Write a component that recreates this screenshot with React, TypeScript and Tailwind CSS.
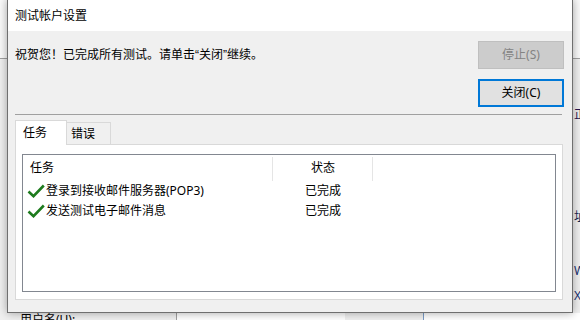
import React from "react";

function Check() {
  return (
    <svg width="18" height="14" viewBox="0 0 18 14" className="shrink-0">
      <path d="M1.5 7.5 L6.5 12.2 L16.8 1.5" fill="none" stroke="#1e7b1e" strokeWidth="2.6" strokeLinejoin="miter" strokeLinecap="butt" />
    </svg>
  );
}

const Q = ({ children }: { children: React.ReactNode }) => (
  <span style={{ fontFamily: '"Liberation Sans", Arial, sans-serif' }}>{children}</span>
);

export default function App() {
  const rows = [
    { name: "登录到接收邮件服务器(POP3)", status: "已完成" },
    { name: "发送测试电子邮件消息", status: "已完成" },
  ];
  return (
    <div
      className="relative w-[580px] h-[320px] overflow-hidden bg-[#f0f0f0] text-[12px] text-black leading-none"
      style={{ fontFamily: '"Noto Sans", "Noto Sans CJK SC", sans-serif' }}
    >
      {/* underlying window */}
      <div className="absolute left-0 right-0 top-0 h-[59px] bg-[#fafafa] border-b border-[#a0a0a0]" />
      <div className="absolute left-[176px] top-[313px] w-[169px] h-[10px] bg-white border-l border-[#a0a0a0]" />
      <div className="absolute left-[423px] top-[313px] w-[160px] h-[10px] bg-white border-l border-[#7a9cc6]" />
      <div className="absolute left-[20px] top-[314px] text-[12px]">用户名(U):</div>
      <div className="absolute left-[574px] top-[109px] text-[12px] text-[#2a1450]">正</div>
      <div className="absolute left-[574px] top-[211px] text-[12px] text-[#1a2a50]">址</div>
      <div className="absolute left-[574px] top-[265px] text-[12px] text-[#1a3070]">W</div>
      <div className="absolute left-[574px] top-[290px] text-[12px] text-[#1a3070]">X</div>

      {/* dialog */}
      <div className="absolute left-[7px] top-[-1px] w-[566px] h-[314px] border border-[#6f6f6f] bg-[#f0f0f0] shadow-[0_0_9px_rgba(0,0,0,0.35)] flex flex-col">
        <div className="h-[31px] bg-white flex items-center pl-[7px] shrink-0">测试帐户设置</div>
        <div className="flex-1 flex flex-col pl-[7px] pr-[8px]">
          <div className="flex justify-between items-start mt-[10px]">
            <div className="h-[28px] flex items-center">
              祝贺您！已完成所有测试。请单击<Q>“</Q>关闭<Q>”</Q>继续。
            </div>
            <div className="flex flex-col gap-[10px]">
              <div className="w-[86px] h-[28px] flex items-center justify-center bg-[#cccccc] border border-[#bfbfbf] text-[#838383]">
                停止(S)
              </div>
              <div className="w-[86px] h-[28px] flex items-center justify-center bg-[#e1e1e1] border-2 border-[#0078d7]">
                关闭(C)
              </div>
            </div>
          </div>
          <div className="mt-[7px] h-px bg-[#a0a0a0] mr-[2px]" />
          <div className="mt-[5px] mr-[1px]">
            <div className="relative z-10 flex items-end h-[24px]">
              <div className="w-[52px] h-[25px] -mb-px bg-white border border-b-0 border-[#d9d9d9] flex items-center pl-[7px]">
                任务
              </div>
              <div className="w-[44px] h-[22px] bg-[#f0f0f0] border-t border-r border-[#d9d9d9] flex items-center pl-[4px]">
                错误
              </div>
            </div>
            <div className="h-[156px] border border-[#d9d9d9] bg-white pt-[9px] pl-[6px] pr-[6px] pb-[7px]">
              <div className="h-full border border-[#828790] bg-white flex flex-col">
                <div className="h-[26px] flex shrink-0">
                  <div className="w-[250px] flex items-center pl-[7px] relative">
                    任务
                    <div className="absolute right-0 top-[2px] bottom-0 w-px bg-[#e5e5e5]" />
                  </div>
                  <div className="w-[100px] flex items-center justify-center relative">
                    状态
                    <div className="absolute right-0 top-[2px] bottom-0 w-px bg-[#e5e5e5]" />
                  </div>
                </div>
                {rows.map((r) => (
                  <div key={r.name} className="h-[20px] flex items-center">
                    <div className="w-[250px] flex items-center pl-[4px]">
                      <Check />
                      <span className="ml-[1px]">{r.name}</span>
                    </div>
                    <div className="w-[100px] text-center">{r.status}</div>
                  </div>
                ))}
              </div>
            </div>
          </div>
        </div>
      </div>
    </div>
  );
}
